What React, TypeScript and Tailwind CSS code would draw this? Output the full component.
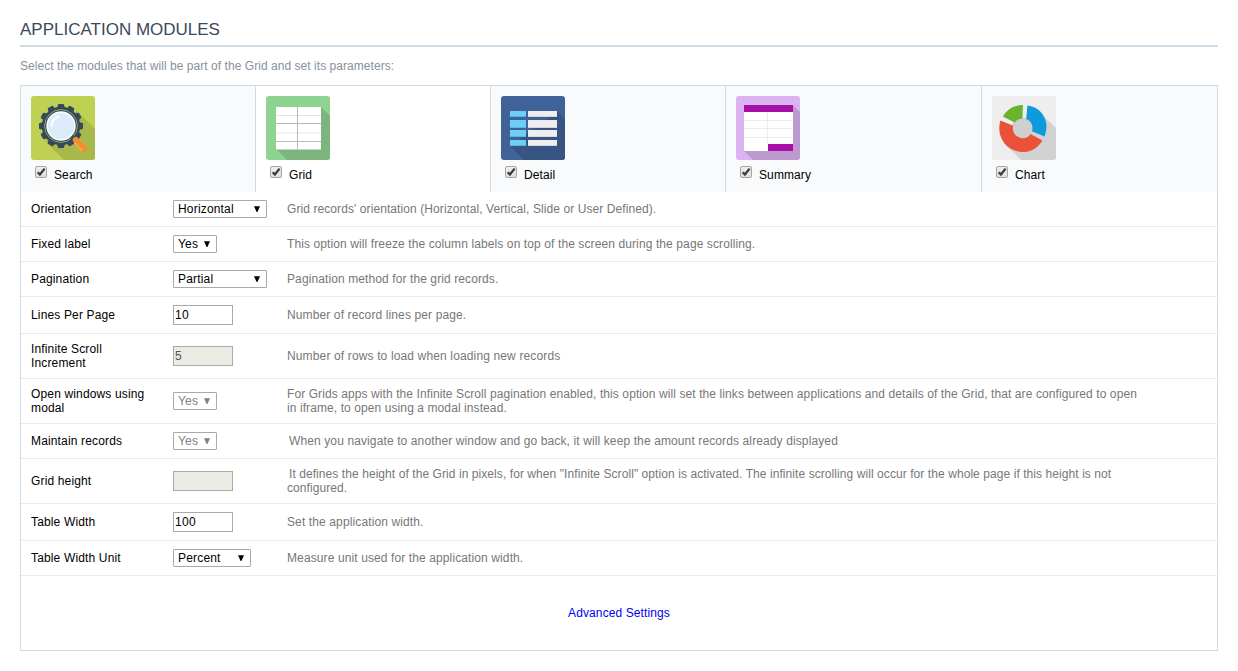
import type { ReactNode } from "react";

const SearchArt = () => (
  <svg width="64" height="64" viewBox="0 0 64 64" className="block">
    <defs>
      <clipPath id="search-clip"><rect width="64" height="64" rx="3" /></clipPath>
    </defs>
    <g clipPath="url(#search-clip)">
      <rect width="64" height="64" fill="#bfd153" />
      <path d="M46 15 L64 33 V64 H33 L14 45 Z" fill="#a8b84a" />
      <circle cx="30" cy="30" r="19.2" fill="#34495e" />
      {[0, 30, 60, 90, 120, 150, 180, 210, 240, 270, 300, 330].map((a) => (
        <path key={a} d="M26 12.5 L27 8.6 Q27.2 8 28 8 H32 Q32.8 8 33 8.6 L34 12.5 Z" fill="#34495e" transform={`rotate(${a} 30 30)`} />
      ))}
      <circle cx="30" cy="30" r="16.4" fill="none" stroke="#9fb25a" strokeWidth="0.9" />
      <circle cx="30" cy="30" r="13.9" fill="#dcebf8" stroke="#f8fbfd" strokeWidth="1.6" />
      <path d="M20.5 30 A9.5 9.5 0 0 1 28 20.6" fill="none" stroke="#ffffff" strokeWidth="2" strokeLinecap="round" />
      <path d="M40.5 40.5 L44.5 44.5" stroke="#34495e" strokeWidth="3.6" />
      <path d="M44.8 44 L53 52.6" stroke="#f68b30" strokeWidth="6" strokeLinecap="round" />
      <path d="M43.3 46.4 L51.3 54.7" stroke="#ffa64a" strokeWidth="1.6" />
    </g>
  </svg>
);

const GridArt = () => (
  <svg width="64" height="64" viewBox="0 0 64 64" className="block">
    <defs>
      <clipPath id="grid-clip"><rect width="64" height="64" rx="3" /></clipPath>
    </defs>
    <g clipPath="url(#grid-clip)">
      <rect width="64" height="64" fill="#8fd391" />
      <path d="M55 11 L64 20 V64 H21 L10 53 Z" fill="#7cb57e" />
      <rect x="10" y="11" width="45" height="43" fill="#fff" />
      <path d="M10 19.5 H55 M10 37 H55" stroke="#e4e4e4" />
      <path d="M10 27.5 H55 M10 45.5 H55 M31.5 11 V54" stroke="#b9bbb9" />
      <path d="M10 53.5 H55" stroke="#c9d4c9" />
    </g>
  </svg>
);

const DetailArt = () => (
  <svg width="64" height="64" viewBox="0 0 64 64" className="block">
    <defs>
      <clipPath id="detail-clip"><rect width="64" height="64" rx="3" /></clipPath>
    </defs>
    <g clipPath="url(#detail-clip)">
      <rect width="64" height="64" fill="#416299" />
      <path d="M56 15 L64 23 V64 H23 L9 50 Z" fill="#385482" />
      {[
        { y: 15, h: 6 },
        { y: 24, h: 8 },
        { y: 34, h: 7 },
        { y: 44, h: 6 },
      ].map(({ y, h }) => (
        <g key={y}>
          <rect x="9" y={y} width="16" height={h} fill="#6dcff6" />
          <rect x="27" y={y} width="29" height={h} fill="#eeeeee" />
          <path d={`M9 ${y + h - 0.5} h16`} stroke="#5fb6dd" />
          <path d={`M27 ${y + h - 0.5} h29`} stroke="#d3d7de" />
        </g>
      ))}
    </g>
  </svg>
);

const SummaryArt = () => (
  <svg width="64" height="64" viewBox="0 0 64 64" className="block">
    <defs>
      <clipPath id="summary-clip"><rect width="64" height="64" rx="3" /></clipPath>
    </defs>
    <g clipPath="url(#summary-clip)">
      <rect width="64" height="64" fill="#dab3f0" />
      <path d="M57 9 L64 16 V64 H17 L8 55 Z" fill="#bc9ace" />
      <rect x="8" y="9" width="49" height="46" fill="#fff" />
      <path d="M8 24.5 H57 M8 32.5 H57 M8 41.5 H57 M31.5 16 V48" stroke="#ececec" />
      <rect x="8" y="9" width="49" height="7" fill="#a810a8" />
      <rect x="32" y="48" width="25" height="7" fill="#a810a8" />
    </g>
  </svg>
);

const ChartArt = () => (
  <svg width="64" height="64" viewBox="0 0 64 64" className="block">
    <defs>
      <clipPath id="chart-clip"><rect width="64" height="64" rx="3" /></clipPath>
    </defs>
    <g clipPath="url(#chart-clip)">
      <rect width="64" height="64" fill="#eeeeee" />
      <path d="M47 16 L64 32 V64 H29 L12 47 Z" fill="#d2d2d2" />
      <circle cx="30.5" cy="32.5" r="11" fill="#cfcfcf" />
      <path d="M31 9 L30.4 22.4 Q25.5 22.5 22.8 26.4 L10.8 20.4 Q17.5 9 31 9 Z" fill="#6ab42d" />
      <path d="M35.4 9.6 C50.5 11.5 58.5 26 52.6 40.6 L40 35.2 C41.6 30 39.5 25 34.2 22.9 Z" fill="#0f9bdb" />
      <path d="M8.4 24.4 L21.2 29.8 C19.5 36 24 42 30.5 42.2 C34.5 42.2 37 40.6 38.6 38 L50.4 44.4 C45 53 38 56 30.5 56 C14.5 55.5 3.5 40.5 8.4 24.4 Z" fill="#ea5138" />
    </g>
  </svg>
);

const CheckBox = () => (
  <svg width="13" height="13" viewBox="0 0 13 13" className="block" role="checkbox" aria-checked="true">
    <defs>
      <linearGradient id="box-fill" x1="0" y1="0" x2="0" y2="1">
        <stop offset="0" stopColor="#f0f0f0" />
        <stop offset="1" stopColor="#dedede" />
      </linearGradient>
    </defs>
    <rect x="0.5" y="0.5" width="11" height="11" rx="1.5" fill="url(#box-fill)" stroke="#a6a6a6" />
    <path d="M2.7 6.2 L4.9 8.5 L9.6 2.6" fill="none" stroke="#3c3c3c" strokeWidth="2.3" />
  </svg>
);

type Tab = { label: string; art: ReactNode; size: string };

const tabs: Tab[] = [
  { label: "Search", art: <SearchArt />, size: "w-[235px] border-r bg-[#f8fafc]" },
  { label: "Grid", art: <GridArt />, size: "w-[235px] border-r bg-white" },
  { label: "Detail", art: <DetailArt />, size: "w-[235px] border-r bg-[#f8fafc]" },
  { label: "Summary", art: <SummaryArt />, size: "w-[256px] border-r bg-[#f8fafc]" },
  { label: "Chart", art: <ChartArt />, size: "flex-1 bg-[#f8fafc]" },
];

const Select = ({ value, size, disabled }: { value: string; size: string; disabled?: boolean }) => (
  <div
    className={`flex h-[18px] items-center justify-between rounded-[1px] border border-[#a9a9a9] bg-white pl-1 pr-[5px] ${size} ${
      disabled ? "text-[#808080]" : "text-black"
    }`}
  >
    <span className="tracking-[0.18px]">{value}</span>
    <svg width="8" height="8" viewBox="0 0 8 8" className="block">
      <path d="M1 1.2 H7 L4.4 7 H3.6 Z" fill="currentColor" />
    </svg>
  </div>
);

const Field = ({ value, disabled }: { value: string; disabled?: boolean }) => (
  <div
    className={`flex h-5 w-[60px] items-center border border-[#a9a9a9] pl-px tracking-[0.3px] ${
      disabled ? "bg-[#ebebe4] text-[#545454]" : "bg-white text-black"
    }`}
  >
    {value}
  </div>
);

type Row = { label: ReactNode; control: ReactNode; text: ReactNode; size: string; tracking: string };

const rows: Row[] = [
  { label: "Orientation", control: <Select value="Horizontal" size="w-[94px]" />, text: "Grid records' orientation (Horizontal, Vertical, Slide or User Defined).", size: "h-[35px]", tracking: "tracking-[0.085px]" },
  { label: "Fixed label", control: <Select value="Yes" size="w-11" />, text: "This option will freeze the column labels on top of the screen during the page scrolling.", size: "h-[35px]", tracking: "tracking-[0.105px]" },
  { label: "Pagination", control: <Select value="Partial" size="w-[94px]" />, text: "Pagination method for the grid records.", size: "h-[35px]", tracking: "tracking-[0.1px]" },
  { label: "Lines Per Page", control: <Field value="10" />, text: "Number of record lines per page.", size: "h-[37px]", tracking: "tracking-[0.12px]" },
  { label: <>Infinite Scroll<br />Increment</>, control: <Field value="5" disabled />, text: "Number of rows to load when loading new records", size: "h-[45px]", tracking: "tracking-[0.14px]" },
  {
    label: <>Open windows using<br />modal</>,
    control: <Select value="Yes" size="w-11" disabled />,
    text: <>For Grids apps with the Infinite Scroll pagination enabled, this option will set the links between applications and details of the Grid, that are configured to open<br />in iframe, to open using a modal instead.</>,
    size: "h-[45px]",
    tracking: "tracking-[0.09px]",
  },
  {
    label: "Maintain records",
    control: <Select value="Yes" size="w-11" disabled />,
    text: <span className="pl-0.5">When you navigate to another window and go back, it will keep the amount records already displayed</span>,
    size: "h-[35px]",
    tracking: "tracking-[0.115px]",
  },
  {
    label: "Grid height",
    control: <Field value="" disabled />,
    text: <><span className="pl-0.5">It defines the height of the Grid in pixels, for when "Infinite Scroll" option is activated. The infinite scrolling will occur for the whole page if this height is not</span><br />configured.</>,
    size: "h-[45px]",
    tracking: "tracking-[0.073px]",
  },
  { label: "Table Width", control: <Field value="100" />, text: "Set the application width.", size: "h-[37px]", tracking: "tracking-[0.12px]" },
  { label: "Table Width Unit", control: <Select value="Percent" size="w-[78px]" />, text: "Measure unit used for the application width.", size: "h-[35px]", tracking: "tracking-[0.11px]" },
];

export default function App() {
  return (
    <div className="h-[671px] w-[1238px] overflow-hidden bg-white px-5 pt-[18px] font-['Liberation_Sans',Arial,sans-serif] text-[12px] leading-[14px] text-black">
      <h1 className="h-[29px] border-b-2 border-[#d0dce4] pt-px text-[17px] leading-[22px] text-[#3c4858]">APPLICATION MODULES</h1>
      <p className="mt-3 h-[26px] tracking-[0.045px] text-[#8592a0]">Select the modules that will be part of the Grid and set its parameters:</p>
      <section className="h-[566px] border border-[#d0dce4]">
        <div className="flex h-[106px]">
          {tabs.map((tab) => (
            <div key={tab.label} className={`border-[#d0dce4] pl-2.5 pt-2.5 ${tab.size}`}>
              {tab.art}
              <div className="flex gap-1.5 pl-1 pt-1.5">
                <CheckBox />
                <span className="pt-0.5 tracking-[0.1px]">{tab.label}</span>
              </div>
            </div>
          ))}
        </div>
        {rows.map((row, i) => (
          <div key={i} className={`flex items-center whitespace-nowrap border-b border-[#e6ecf0] pl-2.5 ${row.size}`}>
            <div className="w-[142px] tracking-[0.15px]">{row.label}</div>
            <div className="w-[114px]">{row.control}</div>
            <div className={`text-[#777777] ${row.tracking}`}>{row.text}</div>
          </div>
        ))}
        <div className="pt-[30px] text-center">
          <a href="#" className="tracking-[0.1px] text-[#0000ee]">Advanced Settings</a>
        </div>
      </section>
    </div>
  );
}
